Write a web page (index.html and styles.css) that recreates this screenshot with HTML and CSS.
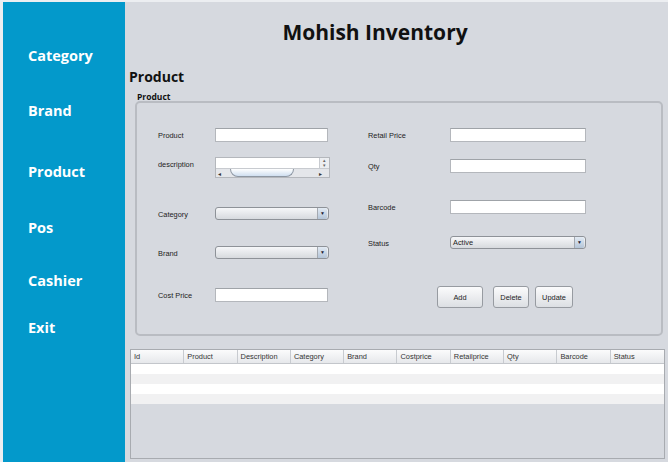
FILE: index.html
```html
<!DOCTYPE html>
<html>
<head>
<meta charset="utf-8">
<link rel="stylesheet" href="styles.css">
</head>
<body>
<div class="app">
  <nav class="sidebar">
    <div class="nav-item n1">Category</div>
    <div class="nav-item n2">Brand</div>
    <div class="nav-item n3">Product</div>
    <div class="nav-item n4">Pos</div>
    <div class="nav-item n5">Cashier</div>
    <div class="nav-item n6">Exit</div>
  </nav>
  <main class="main">
    <h1 class="title">Mohish Inventory</h1>
    <h2 class="heading">Product</h2>
    <div class="legend">Product</div>
    <section class="panel">
      <div class="col left">
        <div class="row r-product"><span class="label">Product</span><div class="input w113"></div></div>
        <div class="row r-desc"><span class="label">description</span>
          <div class="textarea">
            <div class="ta-top"><div class="ta-text"></div><div class="ta-vscroll"><span>▴</span><span>▾</span></div></div>
            <div class="ta-hscroll"><span class="arr">◂</span><div class="thumb"></div><span class="arr r">▸</span></div>
          </div>
        </div>
        <div class="row r-cat"><span class="label">Category</span><div class="combo w114"><span class="combo-text"></span><span class="combo-btn">▼</span></div></div>
        <div class="row r-brand"><span class="label">Brand</span><div class="combo w114"><span class="combo-text"></span><span class="combo-btn">▼</span></div></div>
        <div class="row r-cost"><span class="label">Cost Price</span><div class="input w113"></div></div>
      </div>
      <div class="col right">
        <div class="row r-retail"><span class="label">Retail Price</span><div class="input w136"></div></div>
        <div class="row r-qty"><span class="label">Qty</span><div class="input w136"></div></div>
        <div class="row r-barcode"><span class="label">Barcode</span><div class="input w136"></div></div>
        <div class="row r-status"><span class="label">Status</span><div class="combo w136"><span class="combo-text">Active</span><span class="combo-btn">▼</span></div></div>
        <div class="buttons">
          <button class="btn b-add">Add</button>
          <button class="btn b-del">Delete</button>
          <button class="btn b-upd">Update</button>
        </div>
      </div>
    </section>
    <section class="table">
      <div class="thead">
        <div class="th">Id</div>
        <div class="th">Product</div>
        <div class="th">Description</div>
        <div class="th">Category</div>
        <div class="th">Brand</div>
        <div class="th">Costprice</div>
        <div class="th">Retailprice</div>
        <div class="th">Qty</div>
        <div class="th">Barcode</div>
        <div class="th">Status</div>
      </div>
      <div class="tr white"></div>
      <div class="tr grey"></div>
      <div class="tr white"></div>
      <div class="tr grey"></div>
    </section>
  </main>
</div>
</body>
</html>
```

FILE: styles.css
```css
* { box-sizing: border-box; margin: 0; padding: 0; }
html, body { width: 668px; height: 462px; overflow: hidden; }
body { background: #eceef1; font-family: "Liberation Sans", Arial, sans-serif; }

.app { display: flex; height: 460px; margin: 2px 0 0 3px; }

.sidebar {
  width: 122px;
  background: #0399cb;
  display: flex;
  flex-direction: column;
  padding-left: 25px;
  padding-top: 43px;
}
.nav-item {
  color: #fff;
  font-family: "Open Sans", sans-serif;
  font-weight: 700;
  font-size: 14.5px;
  line-height: 22px;
  height: 22px;
}
.n2 { margin-top: 33px; }
.n3 { margin-top: 39px; }
.n4 { margin-top: 34px; }
.n5 { margin-top: 31px; }
.n6 { margin-top: 25px; }

.main {
  flex: 1;
  background: #d6d9df;
  display: flex;
  flex-direction: column;
  padding-left: 4px;
}
.title {
  font-family: "Open Sans", sans-serif;
  font-weight: 700;
  font-size: 21px;
  line-height: 28px;
  text-align: center;
  color: #111;
  margin-top: 16px;
  margin-right: 47px;
}
.heading {
  font-family: "Open Sans", sans-serif;
  font-weight: 700;
  font-size: 14px;
  line-height: 20px;
  color: #111;
  margin-top: 21px;
}
.legend {
  font-family: "Open Sans", sans-serif;
  font-weight: 700;
  font-size: 8.5px;
  line-height: 10px;
  color: #111;
  margin: 5px 0 -1px 8px;
}
.panel {
  margin: 0 0 0 6px;
  width: 528px;
  height: 235px;
  border: 2px solid #b9bcc2;
  border-radius: 5px;
  display: flex;
}
.col { display: flex; flex-direction: column; }
.left { width: 231px; padding-left: 21px; }
.right { padding-left: 0; }

.row { display: flex; align-items: flex-start; }
.label {
  font-size: 7.4px;
  color: #1c1c1c;
  line-height: 14px;
  height: 14px;
  padding-top: 1px;
}
.left .label { width: 57px; }
.right .label { width: 82px; }

.r-product { margin-top: 25px; }
.r-desc { margin-top: 15px; }
.r-cat { margin-top: 29px; }
.r-brand { margin-top: 25px; }
.r-cost { margin-top: 28px; }

.r-retail { margin-top: 25px; }
.r-qty { margin-top: 17px; }
.r-barcode { margin-top: 27px; }
.r-status { margin-top: 22px; }

.input {
  height: 14px;
  background: #fff;
  border: 1px solid #b4b7bc;
  border-top-color: #9fa3a8;
}
.w113 { width: 113px; }
.w114 { width: 114px; }
.w136 { width: 136px; }

.textarea {
  width: 115px;
  height: 21px;
  border: 1px solid #b4b7bc;
  display: flex;
  flex-direction: column;
  background: #fff;
}
.ta-top { display: flex; height: 11px; }
.ta-text { flex: 1; background: #fff; }
.ta-vscroll {
  width: 10px;
  background: #eceef1;
  border-left: 1px solid #c8cbd0;
  display: flex;
  flex-direction: column;
  align-items: center;
  font-size: 5px;
  line-height: 5px;
  color: #666;
}
.ta-hscroll {
  flex: 1;
  display: flex;
  align-items: center;
  background: #e4e6ea;
  border-top: 1px solid #c8cbd0;
  padding: 0 2px;
  font-size: 6px;
  color: #333;
}
.ta-hscroll .arr { width: 8px; }
.ta-hscroll .arr.r { margin-left: auto; }
.thumb {
  width: 64px;
  height: 8px;
  margin-left: 4px;
  border: 1px solid #8d97a3;
  border-top: none;
  border-radius: 0 0 10px 10px;
  background: linear-gradient(#ffffff, #cfdff0);
}

.combo {
  height: 13px;
  border: 1px solid #8e9298;
  border-radius: 3px;
  background: linear-gradient(#f6f7f9, #d7dade);
  display: flex;
  align-items: center;
}
.combo-text {
  flex: 1;
  font-size: 7.4px;
  color: #1c1c1c;
  padding-left: 2px;
  line-height: 11px;
}
.combo-btn {
  width: 10px;
  height: 11px;
  margin-right: 1px;
  background: linear-gradient(#e2eaf3, #b4c5d8);
  border-left: 1px solid #a4a9b0;
  border-radius: 0 2px 2px 0;
  font-size: 5px;
  line-height: 11px;
  text-align: center;
  color: #223;
}

.buttons { display: flex; margin-top: 36px; margin-left: 69px; }
.btn {
  height: 22px;
  border: 1px solid #979ba1;
  border-radius: 3px;
  background: linear-gradient(#fbfbfc, #dcdfe3);
  font-family: "Liberation Sans", Arial, sans-serif;
  font-size: 7.4px;
  color: #1c1c1c;
}
.b-add { width: 46px; }
.b-del { width: 36px; margin-left: 10px; }
.b-upd { width: 38px; margin-left: 6px; }

.table {
  margin: 13px 0 0 1px;
  width: 535px;
  height: 110px;
  border: 1px solid #a8abb0;
  background: #d6d9df;
}
.thead {
  display: grid;
  grid-template-columns: repeat(10, 1fr);
  height: 14px;
  background: linear-gradient(#fbfbfc, #e6e8eb);
  border-bottom: 1px solid #c3c6cb;
}
.th {
  font-size: 7.4px;
  color: #333;
  line-height: 13px;
  padding-left: 3px;
  border-right: 1px solid #c8cbd0;
}
.th:last-child { border-right: none; }
.tr { height: 10px; }
.white { background: #ffffff; }
.grey { background: #f1f1f2; }
```
